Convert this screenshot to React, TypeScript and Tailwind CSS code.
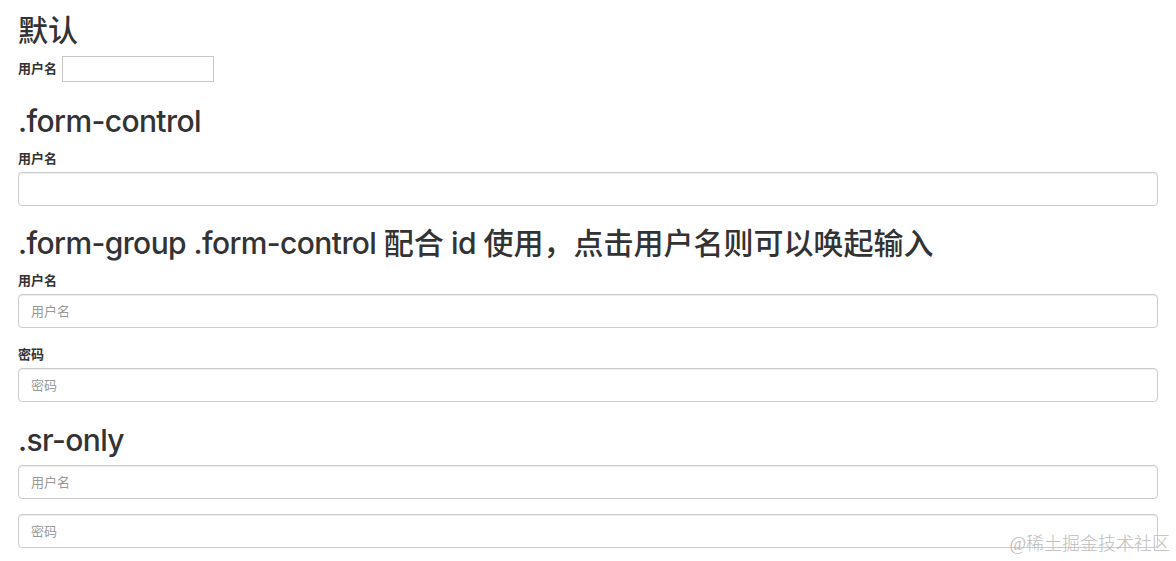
const font = "font-['Liberation_Sans','Noto_Sans_CJK_SC',sans-serif]";

const Heading = ({ children, className }: { children: React.ReactNode; className: string }) => (
    <h2 className={`font-['Inter','Noto_Sans_CJK_SC',sans-serif] text-[30px] leading-[33px] font-medium tracking-[-0.6px] text-[#333] ${className}`}>
        {children}
    </h2>
);

const Cjk = ({ children }: { children: React.ReactNode }) => <span className="tracking-normal">{children}</span>;

const Label = ({ children, className }: { children: React.ReactNode; className: string }) => (
    <label className={`block text-[13px] leading-[17px] font-bold text-[#333] mb-[5px] ${className}`}>
        {children}
    </label>
);

const FormControl = ({ placeholder, type = "text", id, className = "" }: { placeholder?: string; type?: string; id?: string; className?: string }) => (
    <input
        id={id}
        type={type}
        placeholder={placeholder}
        className={`block w-full h-[34px] px-3 text-[13px] text-[#555] bg-white border border-[#ccc] rounded-[4px] shadow-[inset_0_1px_1px_rgba(0,0,0,0.075)] placeholder:text-[#999] outline-none ${className}`}
    />
);

const App = () => {
    return (
        <div className={`relative min-h-[561px] bg-white px-[18px] overflow-hidden ${font}`}>
            <Heading className="pt-[14px]">
                <Cjk>默认</Cjk>
            </Heading>
            <div className="mt-[9px] flex items-center gap-[5px]">
                <label className="text-[13px] font-bold text-[#333]">用户名</label>
                <input type="text" className="w-[152px] h-[26px] border border-[#c9c9c9] bg-white outline-none" />
            </div>

            <Heading className="mt-[23px]">.form-control</Heading>
            <Label className="mt-[12px]">用户名</Label>
            <FormControl />

            <Heading className="mt-[21px]">
                .form-group .form-control <Cjk>配合</Cjk> id <Cjk>使用，点击用户名则可以唤起输入</Cjk>
            </Heading>
            <Label className="mt-[12px]">用户名</Label>
            <FormControl id="username" placeholder="用户名" />
            <Label className="mt-[18px]">密码</Label>
            <FormControl id="password" type="password" placeholder="密码" />

            <Heading className="mt-[22px]">.sr-only</Heading>
            <FormControl className="mt-[8px]" placeholder="用户名" />
            <FormControl className="mt-[15px]" type="password" placeholder="密码" />

            <div className="absolute right-[6px] top-[532px] text-[18px] leading-[24px] text-[#bdbdbd] font-['Liberation_Serif','Noto_Sans_CJK_SC',serif] font-light">
                @稀土掘金技术社区
            </div>
        </div>
    );
};

export default App;
